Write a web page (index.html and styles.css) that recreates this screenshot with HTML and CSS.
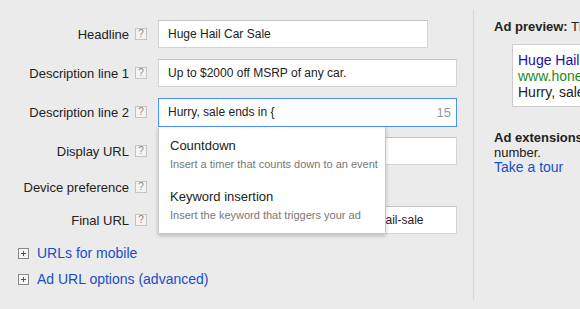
FILE: index.html
```html
<!DOCTYPE html>
<html lang="en">
<head>
  <meta charset="UTF-8">
  <meta name="viewport" content="width=device-width, initial-scale=1.0">
  <title>Edit text ad</title>
  <link rel="stylesheet" href="styles.css">
</head>
<body>
  <div class="page">
    <div class="ad-form">
      <div class="row">
        <label class="label" for="headline">Headline</label>
        <span class="help">?</span>
        <div class="field short">
          <input type="text" id="headline" value="Huge Hail Car Sale">
        </div>
      </div>
      <div class="row">
        <label class="label" for="desc1">Description line 1</label>
        <span class="help">?</span>
        <div class="field">
          <input type="text" id="desc1" value="Up to $2000 off MSRP of any car.">
        </div>
      </div>
      <div class="row">
        <label class="label" for="desc2">Description line 2</label>
        <span class="help">?</span>
        <div class="field focused">
          <input type="text" id="desc2" value="Hurry, sale ends in {">
          <span class="count">15</span>
          <div class="suggest">
            <div class="suggest-item">
              <div class="suggest-title">Countdown</div>
              <div class="suggest-desc">Insert a timer that counts down to an event</div>
            </div>
            <div class="suggest-item">
              <div class="suggest-title">Keyword insertion</div>
              <div class="suggest-desc">Insert the keyword that triggers your ad</div>
            </div>
          </div>
        </div>
      </div>
      <div class="row">
        <label class="label" for="display-url">Display URL</label>
        <span class="help">?</span>
        <div class="field">
          <input type="text" id="display-url" value="www.honestcars.com/hail">
        </div>
      </div>
      <div class="row device">
        <span class="label">Device preference</span>
        <span class="help">?</span>
      </div>
      <div class="row">
        <label class="label" for="final-url">Final URL</label>
        <span class="help">?</span>
        <div class="field">
          <input type="text" id="final-url" value="http://www.honestautocars.com/p/huge-hail-sale">
        </div>
      </div>

      <div class="expanders">
        <a class="expander" href="#"><span class="plus"></span>URLs for mobile</a>
        <a class="expander" href="#"><span class="plus"></span>Ad URL options (advanced)</a>
      </div>
    </div>

    <div class="side">
      <div class="side-title"><b>Ad preview:</b> The following ad previews may be formatted slightly differently</div>
      <div class="ad-box">
        <div class="ad-headline">Huge Hail Car Sale</div>
        <div class="ad-url">www.honestcars.com/hail-sale</div>
        <div class="ad-text">Hurry, sale ends in 5 days</div>
      </div>
      <p class="ext">
        <b>Ad extensions</b> expand your ad with additional information like a phone<br>
        number.<br>
        <a href="#">Take a tour</a>
      </p>
    </div>
  </div>
</body>
</html>
```

FILE: styles.css
```css
html, body {
  margin: 0;
  background-color: #ebebeb;
  overflow: hidden;
}

body {
  font-family: "Liberation Sans", Arial, sans-serif;
  font-size: 13px;
  color: #222;
}

a {
  color: #1a4dcc;
  text-decoration: none;
}

.page {
  display: flex;
  padding: 10px 0 9px;
  height: 290px;
}

.ad-form {
  width: 473px;
  flex-shrink: 0;
  padding-top: 10px;
}

.row {
  display: flex;
  align-items: center;
  height: 28px;
  margin-bottom: 11px;
}

.row.device {
  height: 22px;
  margin-bottom: 8px;
}

.label {
  width: 129px;
  text-align: right;
}

.help {
  display: inline-flex;
  align-items: center;
  justify-content: center;
  box-sizing: border-box;
  width: 12px;
  height: 12px;
  margin-left: 6px;
  border: 1px solid #c4c4c4;
  background-color: #f4f4f4;
  color: #888;
  font-size: 10px;
  line-height: 10px;
}

.field {
  position: relative;
  display: flex;
  align-items: center;
  box-sizing: border-box;
  width: 299px;
  height: 28px;
  margin-left: 11px;
  background-color: white;
  border: 1px solid #d4d4d4;
  border-top-color: #c4c4c4;
}

.field.short {
  width: 270px;
}

.field.focused {
  border-color: #4d90fe;
  height: 29px;
}

.field input {
  flex: 1;
  min-width: 0;
  border: none;
  outline: none;
  padding: 0 9px;
  background: transparent;
  font-family: inherit;
  font-size: 12px;
  color: #222;
}

.count {
  padding-right: 5px;
  color: #999;
}

.suggest {
  position: absolute;
  top: 28px;
  left: -1px;
  z-index: 2;
  width: 226px;
  padding-bottom: 4px;
  background-color: white;
  border: 1px solid #c8c8c8;
  border-top: none;
  box-shadow: 0 2px 4px rgba(0, 0, 0, 0.2);
  white-space: nowrap;
}

.suggest-item {
  padding: 11px 11px 7px;
}

.suggest-title {
  line-height: 16px;
}

.suggest-desc {
  margin-top: 3px;
  line-height: 14px;
  font-size: 11px;
  color: #777;
}

.expanders {
  display: flex;
  flex-direction: column;
  gap: 10px;
  padding-left: 18px;
}

.expander {
  display: flex;
  align-items: center;
  height: 16px;
  font-size: 14px;
}

.plus {
  position: relative;
  box-sizing: border-box;
  width: 11px;
  height: 11px;
  margin-right: 8px;
  border: 1px solid #888;
  background-color: #f6f6f6;
}

.plus::before,
.plus::after {
  content: "";
  position: absolute;
  background-color: #555;
}

.plus::before {
  left: 2px;
  top: 4px;
  width: 5px;
  height: 1px;
}

.plus::after {
  left: 4px;
  top: 2px;
  width: 1px;
  height: 5px;
}

.side {
  flex-shrink: 0;
  width: 300px;
  padding: 9px 0 0 20px;
  border-left: 1px solid #d6d6d6;
  white-space: nowrap;
}

.side-title {
  line-height: 16px;
}

.ad-box {
  width: 240px;
  margin: 9px 0 0 18px;
  padding: 7px 5px 6px;
  background-color: white;
  border: 1px solid #ccc;
  line-height: 16px;
  font-size: 14px;
}

.ad-headline {
  color: #1a0dab;
}

.ad-url {
  color: #1e8a1e;
}

.ext {
  margin: 23px 0 0;
  line-height: 15px;
}

.ext a {
  font-size: 14px;
}
```
